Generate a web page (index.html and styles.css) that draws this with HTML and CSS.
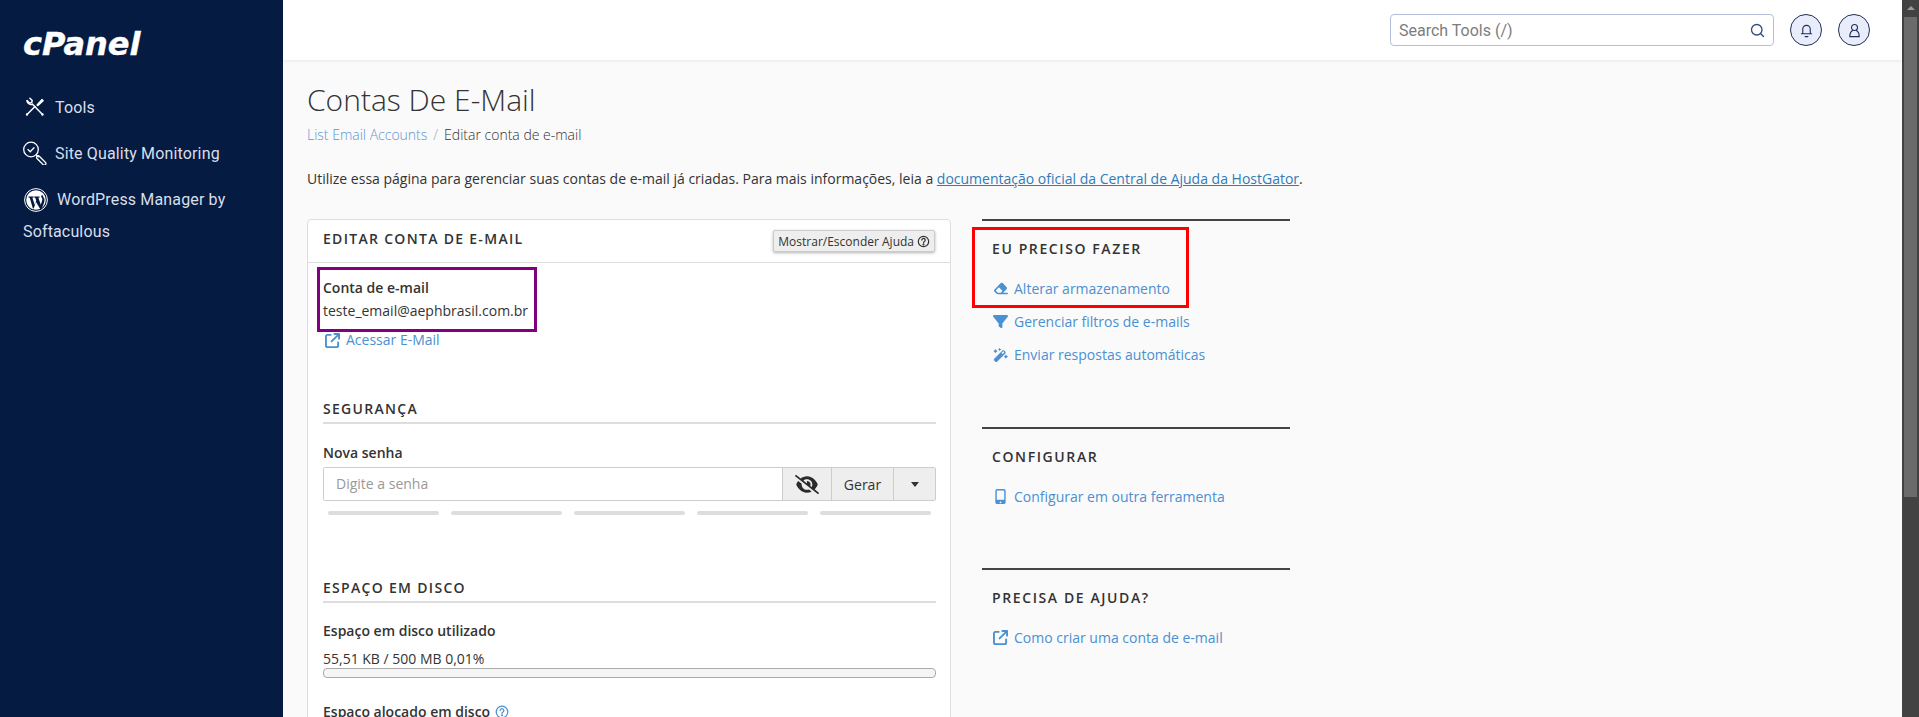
FILE: index.html
```html
<!DOCTYPE html>
<html lang="pt-BR">
<head>
<meta charset="utf-8">
<title>Contas De E-Mail</title>
<link rel="stylesheet" href="styles.css">
</head>
<body>
<div class="app">
  <aside class="sidebar">
    <div class="logo">cPanel</div>
    <nav class="nav">
      <a class="nav-item">
        <svg class="nav-icon" viewBox="0 0 24 24" fill="none" stroke="#fff" stroke-width="1.5" stroke-linecap="round" stroke-linejoin="round"><path d="M4 19.500 12 11.500"/><path d="M14 10l5-5.500 1.200 1.200-5.500 5z" fill="#fff" stroke-width="1.200"/><path d="M19.500 19.500 9.500 9.200"/><path d="M4.600 4.800l2.400 2.500 2.200-.6.500-2-2.300-2.300" transform="translate(-.5 .8)"/><path d="M9.500 9.200C7.500 10 4.300 8.800 4 6"/><path d="M4 19.500h0M19.500 19.500h0" stroke-width="2.400"/></svg>
        <span>Tools</span>
      </a>
      <a class="nav-item">
        <svg class="nav-icon" viewBox="0 0 24 24" fill="none" stroke="#fff" stroke-width="1.300" stroke-linecap="round"><circle cx="8" cy="8.500" r="7.300"/><path d="M5 8.500l2.200 2.200 3.800-4"/><path d="M13.500 14l1.800 1.800"/><path d="M16.300 15.300l6.200 6.200a1.500 1.500 0 0 1-2.300 2.200L14 17.500a1.500 1.500 0 0 1 2.300-2.200z"/></svg>
        <span>Site Quality Monitoring</span>
      </a>
      <a class="nav-item nav-wrap">
        <svg class="nav-icon wp" viewBox="0 0 24 24"><circle cx="12" cy="12" r="11.400" fill="none" stroke="#fff" stroke-width="1"/><circle cx="12" cy="12" r="9.800" fill="#fff"/><path d="M4.500 8.500h5.200v1l-1.300.2 2.400 7.200 1.400-4.300-1-2.900-1-.2v-1h5.400v1l-1.200.2 2.400 7.100 1.400-4.600c.5-1.800-.5-2.400-1-3.400-.3-.6.2-1.600 1.200-1.700l2 4c.4 2-.5 4.600-1.600 7l-1.500 3.400h-.8L12 13.900l-2.300 6.600h-.8L5.700 9.700 4.500 9.500z" fill="#051b41"/></svg>
        WordPress Manager by Softaculous
      </a>
    </nav>
  </aside>
  <div class="main">
    <header class="topbar">
      <div class="search">
        <span class="search-text">Search Tools (/)</span>
        <svg class="search-icon" viewBox="0 0 16 16" fill="none" stroke="#2f4a7d" stroke-width="1.400" stroke-linecap="round"><circle cx="7.200" cy="7.200" r="5.600"/><path d="M11.400 11.400l3 3"/></svg>
      </div>
      <button class="round-btn"><svg viewBox="0 0 16 16" fill="none" stroke="#1f2f5c" stroke-width="1.200" stroke-linecap="round"><path d="M2.500 11.500h11M4 11.500V6.500a4 4 0 0 1 8 0v5"/><path d="M6.500 14.500h3"/></svg></button>
      <button class="round-btn"><svg viewBox="0 0 16 16" fill="none" stroke="#1f2f5c" stroke-width="1.200" stroke-linecap="round"><circle cx="8" cy="4.800" r="3.200"/><path d="M6 8c-1.800 1-3 3-3 6.500h10C13 11 11.800 9 10 8"/></svg></button>
    </header>
    <main class="content">
      <h1 class="page-title">Contas De E-Mail</h1>
      <div class="crumbs"><a class="crumb-link">List Email Accounts</a><span class="crumb-sep">/</span><span>Editar conta de e-mail</span></div>
      <p class="intro">Utilize essa página para gerenciar suas contas de e-mail já criadas. Para mais informações, leia a <a class="link-u">documentação oficial da Central de Ajuda da HostGator</a>.</p>
      <div class="columns">
        <section class="panel">
          <div class="panel-head">
            <h2 class="head-title">EDITAR CONTA DE E-MAIL</h2>
            <button class="help-btn">Mostrar/Esconder Ajuda <svg class="help-icon" viewBox="0 0 16 16" fill="none" stroke="#333" stroke-width="1.500"><circle cx="8" cy="8" r="6.400"/><path d="M5.900 6.300a2.100 2.100 0 1 1 3.200 1.800c-.7.4-1.100.8-1.100 1.600" stroke-linecap="round"/><circle cx="8" cy="11.800" r=".5" fill="#333"/></svg></button>
          </div>
          <div class="panel-body">
            <div class="account">
              <div class="label">Conta de e-mail</div>
              <div class="account-value">teste_email@aephbrasil.com.br</div>
            </div>
            <a class="link access"><svg class="lk-icon" viewBox="0 0 512 512" fill="#4a90d2"><path d="M320 0c-18 0-32 14-32 32s14 32 32 32h83L201 265c-12 13-12 33 0 46s33 12 46 0l201-202v83c0 18 14 32 32 32s32-14 32-32V32c0-18-14-32-32-32H320zM80 32C36 32 0 68 0 112v320c0 44 36 80 80 80h320c44 0 80-36 80-80V320c0-18-14-32-32-32s-32 14-32 32v112c0 9-7 16-16 16H80c-9 0-16-7-16-16V112c0-9 7-16 16-16h112c18 0 32-14 32-32s-14-32-32-32H80z"/></svg>Acessar E-Mail</a>

            <h3 class="section-title sec-1">SEGURANÇA</h3>
            <div class="label label-pass">Nova senha</div>
            <div class="input-group">
              <div class="pass-input">Digite a senha</div>
              <div class="addon eye"><svg viewBox="0 0 640 512" fill="#2b2b2b"><path d="M38.800 5.100C28.400-3.100 13.300-1.200 5.100 9.200S-1.200 34.700 9.200 42.900l592 464c10.400 8.200 25.500 6.300 33.700-4.100s6.300-25.500-4.100-33.700L525.600 386.700c39.600-40.600 66.400-86.100 79.900-118.400 3.300-7.900 3.300-16.700 0-24.600-14.900-35.700-46.200-87.700-93-131.100C465.500 68.800 400.800 32 320 32c-68.200 0-125 26.300-169.300 60.800L38.800 5.100zM223.100 149.500C248.600 126.200 282.700 112 320 112c79.500 0 144 64.500 144 144 0 24.900-6.300 48.300-17.400 68.700L408 294.500c8.400-19.300 10.600-41.400 4.800-63.300-11.100-41.500-47.800-69.400-88.600-71.100-5.800-.2-9.200 6.100-7.400 11.700 2.100 6.400 3.300 13.200 3.300 20.300 0 10.200-2.400 19.800-6.600 28.300l-90.300-70.800zM373 389.900c-16.400 6.500-34.300 10.100-53 10.100-79.500 0-144-64.500-144-144 0-6.900.5-13.600 1.400-20.200L83.100 161.500C60.300 191.200 44 220.800 34.500 243.700c-3.300 7.900-3.300 16.700 0 24.600 14.900 35.700 46.200 87.700 93 131.100C174.500 443.200 239.200 480 320 480c47.800 0 89.900-12.900 126.200-32.500L373 389.900z"/></svg></div>
              <div class="addon gen">Gerar</div>
              <div class="addon caret"><span class="caret-shape"></span></div>
            </div>
            <div class="strength"><span></span><span></span><span></span><span></span><span></span></div>

            <h3 class="section-title sec-2">ESPAÇO EM DISCO</h3>
            <div class="label label-disk">Espaço em disco utilizado</div>
            <div class="usage">55,51 KB / 500 MB 0,01%</div>
            <div class="progress"></div>
            <div class="label label-alloc">Espaço alocado em disco <svg class="q-icon" viewBox="0 0 16 16" fill="none" stroke="#4a90d2" stroke-width="1.400"><circle cx="8" cy="8" r="6.600"/><path d="M5.900 6.300a2.100 2.100 0 1 1 3.200 1.800c-.7.4-1.100.8-1.100 1.600" stroke-linecap="round"/><circle cx="8" cy="11.800" r=".5" fill="#4a90d2"/></svg></div>
          </div>
        </section>
        <aside class="side">
          <section class="side-box">
            <h4 class="side-title">EU PRECISO FAZER</h4>
            <a class="link side-link"><svg class="side-icon" viewBox="0 0 576 512" fill="#4a90d2"><path d="M290.700 57.400 57.400 290.700c-25 25-25 65.500 0 90.500l80 80c12 12 28.300 18.700 45.300 18.700H544c17.700 0 32-14.300 32-32s-14.300-32-32-32H387.900l130.700-130.600c25-25 25-65.500 0-90.500L381.300 57.400c-25-25-65.500-25-90.500 0zM297.400 416H182.600l-80-80 124.700-124.700 137.400 137.400-67.300 67.300z"/></svg>Alterar armazenamento</a>
            <a class="link side-link"><svg class="side-icon" viewBox="0 0 512 512" fill="#4a90d2"><path d="M3.900 54.900C10.500 40.900 24.500 32 40 32h432c15.500 0 29.500 8.900 36.100 22.900s4.600 30.500-5.200 42.500L320 320.900V448c0 12.100-6.800 23.200-17.700 28.600s-23.800 4.300-33.500-3l-64-48c-8.100-6-12.800-15.500-12.800-25.600v-79.100L9 97.300C-.7 85.400-2.800 68.800 3.900 54.900z"/></svg>Gerenciar filtros de e-mails</a>
            <a class="link side-link"><svg class="side-icon" viewBox="0 0 576 512" fill="#4a90d2"><path d="M234.700 42.700 197 56.800c-3 1.100-5 4-5 7.200s2 6.100 5 7.200l37.700 14.100 14.100 37.700c1.100 3 4 5 7.200 5s6.100-2 7.200-5l14.100-37.700L315 71.200c3-1.100 5-4 5-7.200s-2-6.100-5-7.200l-37.700-14.100-14.100-37.700C262.100 2 259.200 0 256 0s-6.100 2-7.200 5l-14.100 37.700zM46.100 420.400c-18.700 18.700-18.700 49.100 0 67.900l41.700 41.700c18.700 18.700 49.100 18.700 67.900 0l316.300-316.400c18.700-18.700 18.700-49.100 0-67.900l-41.700-41.600c-18.700-18.700-49.100-18.700-67.900 0L46.100 420.400zM438.100 172.100l-68.800 68.800-45.600-45.600 68.800-68.800 45.600 45.600zM16 128 64 96l32-48 32 48 48 32-48 32-32 48-32-48-48-32zM416 336l48-32 32-48 32 48 48 32-48 32-32 48-32-48-48-32z"/></svg>Enviar respostas automáticas</a>
          </section>
          <section class="side-box box-config">
            <h4 class="side-title">CONFIGURAR</h4>
            <a class="link side-link"><svg class="side-icon" viewBox="0 0 384 512" fill="#4a90d2"><path d="M80 0C44.700 0 16 28.700 16 64v384c0 35.300 28.700 64 64 64h224c35.300 0 64-28.700 64-64V64c0-35.300-28.700-64-64-64H80zm-16 64c0-8.800 7.200-16 16-16h224c8.800 0 16 7.200 16 16v304H64V64zm128 424a32 32 0 1 1 0-64 32 32 0 1 1 0 64z"/></svg>Configurar em outra ferramenta</a>
          </section>
          <section class="side-box box-help">
            <h4 class="side-title">PRECISA DE AJUDA?</h4>
            <a class="link side-link"><svg class="side-icon" viewBox="0 0 512 512" fill="#4a90d2"><path d="M320 0c-18 0-32 14-32 32s14 32 32 32h83L201 265c-12 13-12 33 0 46s33 12 46 0l201-202v83c0 18 14 32 32 32s32-14 32-32V32c0-18-14-32-32-32H320zM80 32C36 32 0 68 0 112v320c0 44 36 80 80 80h320c44 0 80-36 80-80V320c0-18-14-32-32-32s-32 14-32 32v112c0 9-7 16-16 16H80c-9 0-16-7-16-16V112c0-9 7-16 16-16h112c18 0 32-14 32-32s-14-32-32-32H80z"/></svg>Como criar uma conta de e-mail</a>
          </section>
          <div class="red-mark"></div>
        </aside>
      </div>
    </main>
  </div>
  <div class="scrollbar">
    <div class="scroll-up"><span class="scroll-arrow"></span></div>
    <div class="scroll-thumb"></div>
  </div>
</div>
</body>
</html>
```

FILE: styles.css
```css
* { box-sizing: border-box; }
html, body { margin: 0; height: 717px; overflow: hidden; }
body { font-family: "Open Sans", sans-serif; font-size: 14px; color: #333; background: #fafafa; }
.app { display: flex; height: 717px; overflow: hidden; }

.sidebar { width: 283px; flex: none; background: #051b41; color: #d8dfea; padding: 24px 23px 0; font-family: Roboto, sans-serif; font-size: 16px; letter-spacing: .15px; }
.logo { font-family: "DejaVu Sans", sans-serif; font-weight: 700; font-style: italic; font-size: 32px; line-height: 40px; color: #fff; letter-spacing: 0; -webkit-text-stroke: .4px #fff; }
.nav { margin-top: 20px; }
.nav-item { display: flex; align-items: center; height: 46px; }
.nav-wrap { display: block; height: auto; line-height: 32px; padding-top: 8px; }
.nav-icon { width: 24px; height: 24px; margin-right: 8px; flex: none; vertical-align: -7px; }
.wp { margin: 0 5px 0 1px; }

.main { flex: 1; min-width: 0; display: flex; flex-direction: column; }
.topbar { height: 60px; flex: none; background: #fff; box-shadow: 0 1px 3px rgba(0,0,0,.08); display: flex; align-items: center; justify-content: flex-end; padding: 0 32px 0 0; gap: 16px; position: relative; }
.search { width: 384px; height: 32px; border: 1px solid #b3bfd6; border-radius: 4px; display: flex; align-items: center; justify-content: space-between; padding: 0 8px; font-family: Roboto, sans-serif; font-size: 16px; color: #7d7d7d; }
.search-icon { width: 15px; height: 15px; }
.round-btn { width: 32px; height: 32px; border-radius: 50%; border: 1px solid #1f2f5c; background: #e9edfb; padding: 0; display: flex; align-items: center; justify-content: center; }
.round-btn svg { width: 15px; height: 15px; }

.content { flex: 1; padding: 0 24px; overflow: hidden; }
.page-title { font-weight: 300; font-size: 30px; line-height: 40px; margin: 20px 0 0; color: #333; }
.crumbs { font-size: 14px; font-weight: 300; line-height: 20px; margin-top: 5px; color: #333; }
.crumb-link { color: #5c94d4; }
.crumb-sep { color: #aaa; margin: 0 6px; }
.intro { margin: 24px 0 0; line-height: 20px; font-size: 14px; color: #333; }
.link-u { color: #337ab7; text-decoration: underline; }

.columns { display: flex; align-items: flex-start; margin-top: 30px; position: relative; }
.panel { width: 644px; background: #fff; border: 1px solid #ddd; border-radius: 4px; flex: none; }
.panel-head { height: 43px; border-bottom: 1px solid #ddd; display: flex; align-items: center; justify-content: space-between; padding: 0 15px 6px 15px; }
.head-title { font-size: 14px; font-weight: 600; letter-spacing: 1.3px; margin: 0; color: #333; }
.help-btn { font-family: "Open Sans", sans-serif; font-size: 12px; height: 22px; padding: 0 4px; background: #eee; border: 1px solid #ccc; border-radius: 2px; box-shadow: 0 1px 3px rgba(0,0,0,.3); color: #333; display: flex; align-items: center; gap: 3px; margin-top: 6px; }
.help-icon { width: 13px; height: 13px; }
.panel-body { padding: 0 14px 0 15px; }
.account { width: 220px; height: 65px; margin: 4px 0 0 -6px; border: 3px solid #800080; padding: 6px 0 0 3px; line-height: 24px; white-space: nowrap; }
.label { font-weight: 600; font-size: 14px; color: #333; line-height: 20px; }
.account .label { line-height: 24px; }
.account-value { margin-top: -1px; }
.link { color: #4a90d2; display: flex; align-items: center; }
.access { margin-top: -2px; line-height: 20px; }
.lk-icon { width: 15px; height: 15px; margin: 0 6px 0 2px; flex: none; }
.section-title { font-size: 14px; font-weight: 600; letter-spacing: 1.3px; margin: 0; padding-bottom: 3px; border-bottom: 2px solid #ddd; line-height: 20px; color: #333; }
.sec-1 { margin-top: 49px; }
.label-pass { margin-top: 19px; }
.input-group { display: flex; height: 34px; margin-top: 4px; border: 1px solid #ccc; border-radius: 2px; }
.pass-input { flex: 1; padding: 0 12px; line-height: 32px; color: #999; background: #fff; }
.addon { background: #eee; border-left: 1px solid #ccc; display: flex; align-items: center; justify-content: center; height: 32px; color: #333; }
.eye { width: 49px; }
.eye svg { width: 24px; height: 19px; }
.gen { width: 62px; }
.caret { width: 42px; }
.caret-shape { width: 0; height: 0; border: 4px solid transparent; border-top: 5px solid #333; border-bottom: 0; }
.strength { display: flex; gap: 12px; padding: 0 5px; margin-top: 10px; }
.strength span { flex: 1; height: 4px; background: #ddd; border-radius: 2px; }
.sec-2 { margin-top: 63px; }
.label-disk { margin-top: 18px; }
.usage { margin-top: 8px; line-height: 20px; }
.progress { height: 10px; background: #f5f5f5; border: 1px solid #aaa; border-radius: 4px; margin-top: -1px; }
.label-alloc { margin-top: 24px; display: flex; align-items: center; gap: 5px; }
.q-icon { width: 14px; height: 14px; }

.side { margin-left: 31px; width: 308px; position: relative; }
.side-box { border-top: 2px solid #444; padding: 18px 11px 0; }
.side-title { font-size: 14px; font-weight: 600; letter-spacing: 1.6px; margin: 0 0 13px -1px; line-height: 20px; color: #333; }
.side-link { height: 33px; white-space: nowrap; }
.side-icon { width: 15px; height: 15px; margin-right: 6px; flex: none; }
.box-config { margin-top: 56px; }
.box-help { margin-top: 55px; }
.red-mark { position: absolute; left: -10px; top: 8px; width: 217px; height: 81px; border: 3px solid #f00; }

.scrollbar { width: 17px; flex: none; background: #424242; }
.scroll-up { height: 17px; display: flex; justify-content: center; padding-top: 6px; }
.scroll-arrow { width: 0; height: 0; border: 4px solid transparent; border-bottom: 4px solid #9a9a9a; border-top: 0; }
.scroll-thumb { height: 480px; margin: 0 2px; background: #6b6b6b; }
```
